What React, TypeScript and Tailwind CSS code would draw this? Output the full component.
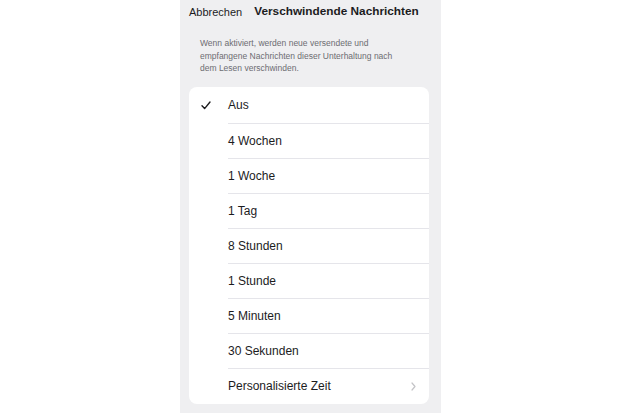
import React from "react";

const options = [
  "Aus",
  "4 Wochen",
  "1 Woche",
  "1 Tag",
  "8 Stunden",
  "1 Stunde",
  "5 Minuten",
  "30 Sekunden",
];

const Check = () => (
  <svg width="10" height="9" viewBox="0 0 10 9" fill="none">
    <path d="M1 4.8 L3.6 7.6 L9 1" stroke="#1c1c1e" strokeWidth="1.4" strokeLinecap="round" strokeLinejoin="round" />
  </svg>
);

const Chevron = () => (
  <svg width="5" height="9" viewBox="0 0 5 9" fill="none">
    <path d="M1 1 L4 4.5 L1 8" stroke="#c4c4c7" strokeWidth="1.2" strokeLinecap="round" strokeLinejoin="round" />
  </svg>
);

const App: React.FC = () => {
  return (
    <div className="w-[621px] h-[414px] bg-white flex justify-center" style={{ fontFamily: '"Liberation Sans", Arial, sans-serif' }}>
      <div className="w-[261px] h-[413px] bg-[#efeff1] flex flex-col">
        <div className="h-[24px] flex items-center pl-[9px] gap-[12px] text-[#1c1c1e]">
          <span className="text-[11px]">Abbrechen</span>
          <span className="text-[11.8px] font-bold">Verschwindende Nachrichten</span>
        </div>
        <p className="mt-[13px] pl-[20px] pr-[30px] text-[8.5px] leading-[12.5px] text-[#6d6d72]">
          Wenn aktiviert, werden neue versendete und empfangene Nachrichten dieser Unterhaltung nach dem Lesen verschwinden.
        </p>
        <div className="mt-[12px] ml-[9px] w-[240px] bg-white rounded-[8px] overflow-hidden">
          {options.map((label, i) => (
            <div key={label} className={`flex ${i === 0 ? "h-[37px]" : "h-[35px]"}`}>
              <div className="w-[39px] flex items-center pl-[12px]">{i === 0 && <Check />}</div>
              <div className="flex-1 flex items-center border-b border-[#e5e5ea] text-[12px] text-[#1c1c1e]">
                {label}
              </div>
            </div>
          ))}
          <div className="flex h-[35px]">
            <div className="w-[39px]" />
            <div className="flex-1 flex items-center justify-between pr-[13px] text-[12px] text-[#1c1c1e]">
              <span>Personalisierte Zeit</span>
              <Chevron />
            </div>
          </div>
        </div>
      </div>
    </div>
  );
};

export default App;
